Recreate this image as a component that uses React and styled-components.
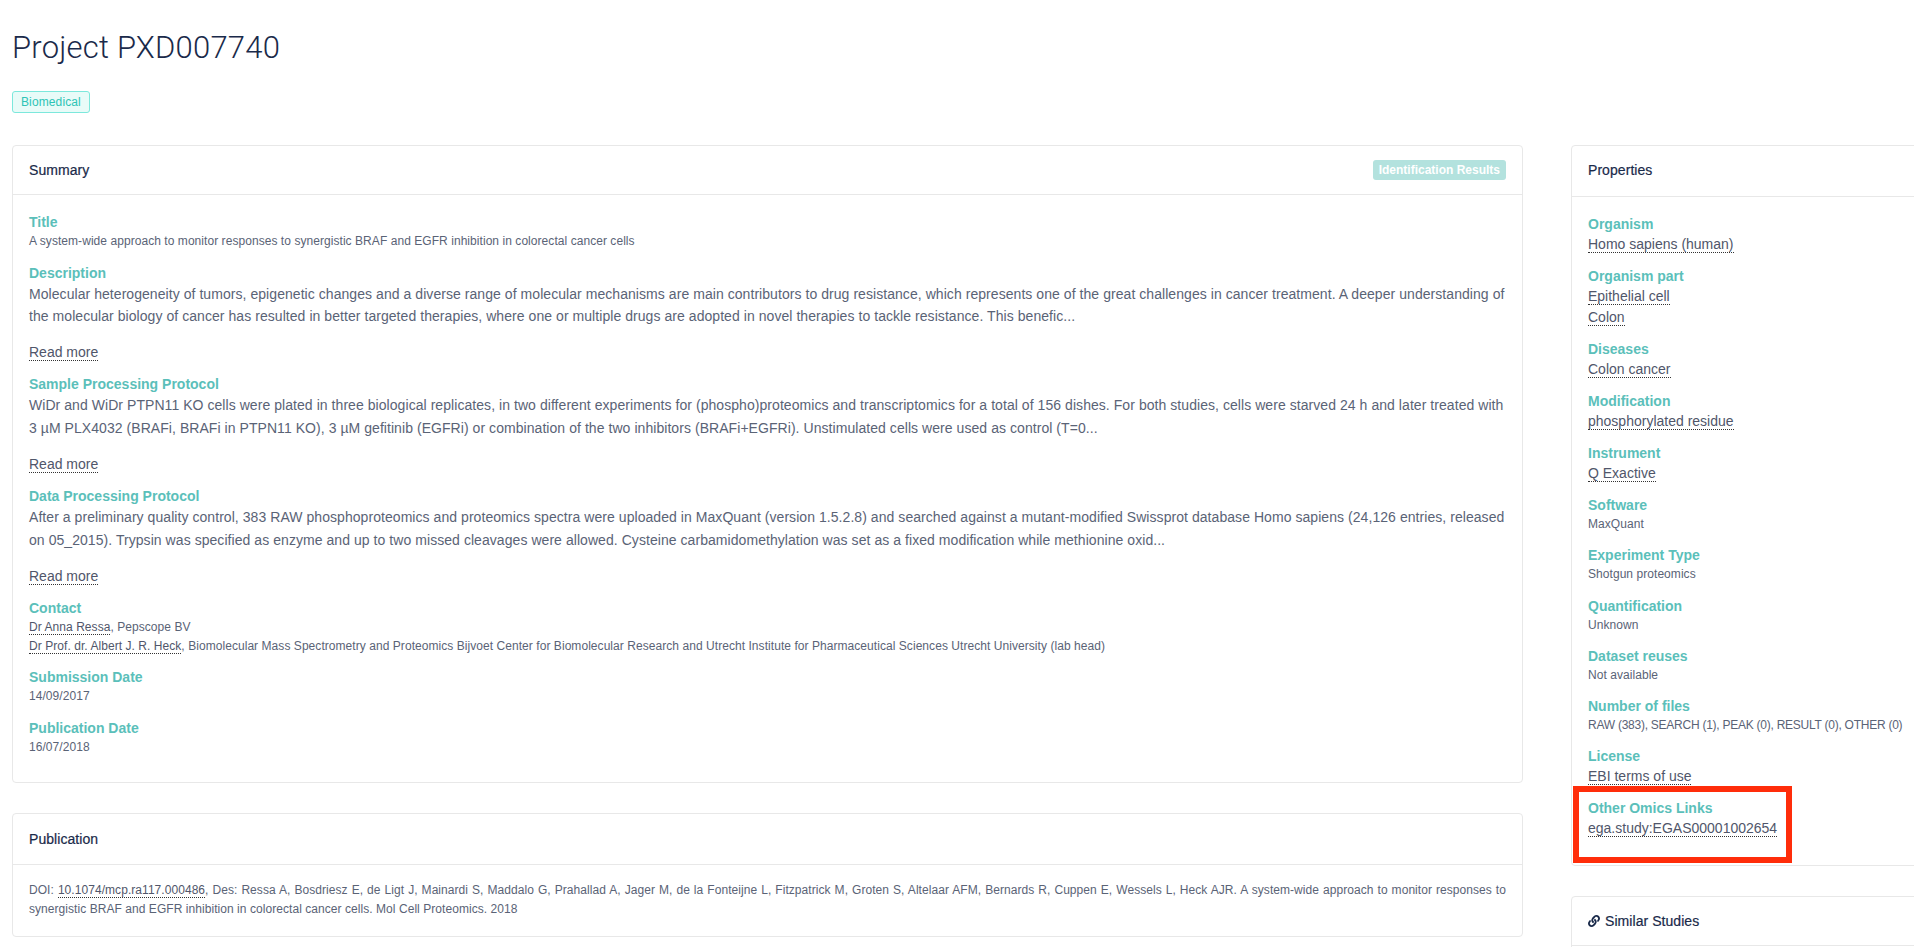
import styled, { createGlobalStyle } from "styled-components";
import { FaLink } from "react-icons/fa";

const GlobalStyle = createGlobalStyle`
  html, body {
    margin: 0;
    padding: 0;
    background: #fff;
    overflow: hidden;
  }
  body {
    font-family: "Liberation Sans", Arial, sans-serif;
    color: #4a5568;
  }
`;

const Page = styled.div`
  width: 1914px;
  height: 947px;
  overflow: hidden;
  padding: 30px 0 0 12px;
  box-sizing: border-box;
`;

const Heading = styled.h1`
  margin: 0;
  font-family: Roboto, "Liberation Sans", sans-serif;
  font-size: 31px;
  line-height: 36px;
  font-weight: 300;
  letter-spacing: 0.22px;
  color: #1a2a4a;
`;

const Tag = styled.span`
  display: block;
  width: fit-content;
  margin-top: 25px;
  height: 22px;
  line-height: 20px;
  box-sizing: border-box;
  padding: 0 8px;
  font-size: 12px;
  letter-spacing: 0.12px;
  color: #2ec4b6;
  background: #e8fbf8;
  border: 1px solid #7ce8dc;
  border-radius: 3px;
`;

const Columns = styled.div`
  display: grid;
  grid-template-columns: 1511px 420px;
  column-gap: 48px;
  margin-top: 32px;
  align-items: start;
`;

const Stack = styled.div`
  display: flex;
  flex-direction: column;
  gap: 30px;
`;

const Card = styled.section`
  position: relative;
  border: 1px solid #e8e8e8;
  border-radius: 4px;
  background: #fff;
`;

const CardHeader = styled.header`
  display: flex;
  align-items: center;
  justify-content: space-between;
  box-sizing: border-box;
  height: ${(p) => p.$height || 49}px;
  padding: 0 16px ${(p) => p.$lift || 0}px;
  border-bottom: 1px solid #e8e8e8;
  font-size: 14px;
  letter-spacing: 0.06px;
  color: #1a2a4a;
`;

const CardTitle = styled.span`
  display: inline-flex;
  align-items: center;
  gap: 5px;
  -webkit-text-stroke: 0.2px #1a2a4a;

  svg {
    width: 12px;
    height: 12px;
  }
`;

const ResultsBadge = styled.span`
  height: 20px;
  line-height: 20px;
  padding: 0 6px;
  font-size: 12px;
  font-weight: 700;
  letter-spacing: 0;
  color: #fff;
  background: #b3e2de;
  border-radius: 3px;
`;

const CardBody = styled.div`
  padding: ${(p) => p.$pad || "18px 16px 12.5px"};
`;

const Field = styled.div`
  margin-bottom: ${(p) => p.$gap ?? 12.5}px;
`;

const Label = styled.div`
  margin-bottom: 1px;
  font-size: 14px;
  line-height: 18px;
  font-weight: 700;
  color: #5bbfba;
`;

const Small = styled.div`
  font-size: 12px;
  line-height: 19px;
  letter-spacing: ${(p) => p.$spacing ?? 0.055}px;
  text-align: ${(p) => (p.$justify ? "justify" : "left")};
  color: #5a6376;
`;

const Para = styled.p`
  margin: 0 0 15px;
  font-size: 14px;
  line-height: 22.4px;
  letter-spacing: 0.057px;
  color: #5a6376;
`;

const Value = styled.div`
  font-size: 14px;
  line-height: 21px;
  color: #5a6376;
`;

const Dotted = styled.a`
  color: #50566a;
  border-bottom: 1px dotted #333;
`;

const RedBox = styled.div`
  position: absolute;
  left: 1px;
  bottom: 2px;
  width: 219px;
  height: 77px;
  box-sizing: border-box;
  border: 6px solid #ff2d0a;
`;

const summary = [
  {
    label: "Description",
    text: "Molecular heterogeneity of tumors, epigenetic changes and a diverse range of molecular mechanisms are main contributors to drug resistance, which represents one of the great challenges in cancer treatment. A deeper understanding of the molecular biology of cancer has resulted in better targeted therapies, where one or multiple drugs are adopted in novel therapies to tackle resistance. This benefic...",
  },
  {
    label: "Sample Processing Protocol",
    text: "WiDr and WiDr PTPN11 KO cells were plated in three biological replicates, in two different experiments for (phospho)proteomics and transcriptomics for a total of 156 dishes. For both studies, cells were starved 24 h and later treated with 3 µM PLX4032 (BRAFi, BRAFi in PTPN11 KO), 3 µM gefitinib (EGFRi) or combination of the two inhibitors (BRAFi+EGFRi). Unstimulated cells were used as control (T=0...",
  },
  {
    label: "Data Processing Protocol",
    text: "After a preliminary quality control, 383 RAW phosphoproteomics and proteomics spectra were uploaded in MaxQuant (version 1.5.2.8) and searched against a mutant-modified Swissprot database Homo sapiens (24,126 entries, released on 05_2015). Trypsin was specified as enzyme and up to two missed cleavages were allowed. Cysteine carbamidomethylation was set as a fixed modification while methionine oxid...",
  },
];

const properties = [
  { label: "Organism", links: ["Homo sapiens (human)"] },
  { label: "Organism part", links: ["Epithelial cell", "Colon"] },
  { label: "Diseases", links: ["Colon cancer"] },
  { label: "Modification", links: ["phosphorylated residue"] },
  { label: "Instrument", links: ["Q Exactive"] },
  { label: "Software", text: "MaxQuant" },
  { label: "Experiment Type", text: "Shotgun proteomics" },
  { label: "Quantification", text: "Unknown" },
  { label: "Dataset reuses", text: "Not available" },
  { label: "Number of files", text: "RAW (383), SEARCH (1), PEAK (0), RESULT (0), OTHER (0)", spacing: -0.25 },
  { label: "License", links: ["EBI terms of use"] },
  { label: "Other Omics Links", links: ["ega.study:EGAS00001002654"] },
];

export default function App() {
  return (
    <Page>
      <GlobalStyle />
      <Heading>Project PXD007740</Heading>
      <Tag>Biomedical</Tag>
      <Columns>
        <Stack>
          <Card>
            <CardHeader>
              <CardTitle>Summary</CardTitle>
              <ResultsBadge>Identification Results</ResultsBadge>
            </CardHeader>
            <CardBody>
              <Field>
                <Label>Title</Label>
                <Small>A system-wide approach to monitor responses to synergistic BRAF and EGFR inhibition in colorectal cancer cells</Small>
              </Field>
              {summary.map((s) => (
                <Field $gap={12} key={s.label}>
                  <Label>{s.label}</Label>
                  <Para>{s.text}</Para>
                  <Value><Dotted>Read more</Dotted></Value>
                </Field>
              ))}
              <Field>
                <Label>Contact</Label>
                <Small>
                  <Dotted>Dr Anna Ressa</Dotted>, Pepscope BV
                </Small>
                <Small>
                  <Dotted>Dr Prof. dr. Albert J. R. Heck</Dotted>, Biomolecular Mass Spectrometry and Proteomics Bijvoet Center for Biomolecular Research and Utrecht Institute for Pharmaceutical Sciences Utrecht University (lab head)
                </Small>
              </Field>
              <Field>
                <Label>Submission Date</Label>
                <Small>14/09/2017</Small>
              </Field>
              <Field>
                <Label>Publication Date</Label>
                <Small>16/07/2018</Small>
              </Field>
            </CardBody>
          </Card>
          <Card>
            <CardHeader $height={51}>
              <CardTitle>Publication</CardTitle>
            </CardHeader>
            <CardBody $pad="16px 16px 17px">
              <Small $justify>
                DOI: <Dotted>10.1074/mcp.ra117.000486</Dotted>, Des: Ressa A, Bosdriesz E, de Ligt J, Mainardi S, Maddalo G, Prahallad A, Jager M, de la Fonteijne L, Fitzpatrick M, Groten S, Altelaar AFM, Bernards R, Cuppen E, Wessels L, Heck AJR. A system-wide approach to monitor responses to synergistic BRAF and EGFR inhibition in colorectal cancer cells. Mol Cell Proteomics. 2018
              </Small>
            </CardBody>
          </Card>
        </Stack>
        <Stack>
          <Card>
            <CardHeader $height={51} $lift={2}>
              <CardTitle>Properties</CardTitle>
            </CardHeader>
            <CardBody $pad="18px 16px 26px">
              {properties.map((p, i) => (
                <Field key={p.label} $gap={i === properties.length - 1 ? 0 : p.links ? 12 : 12.25}>
                  <Label>{p.label}</Label>
                  {p.links ? (
                    p.links.map((l) => (
                      <Value key={l}><Dotted>{l}</Dotted></Value>
                    ))
                  ) : (
                    <Small $spacing={p.spacing}>{p.text}</Small>
                  )}
                </Field>
              ))}
            </CardBody>
            <RedBox />
          </Card>
          <Card>
            <CardHeader>
              <CardTitle><FaLink />Similar Studies</CardTitle>
            </CardHeader>
            <CardBody />
          </Card>
        </Stack>
      </Columns>
    </Page>
  );
}
